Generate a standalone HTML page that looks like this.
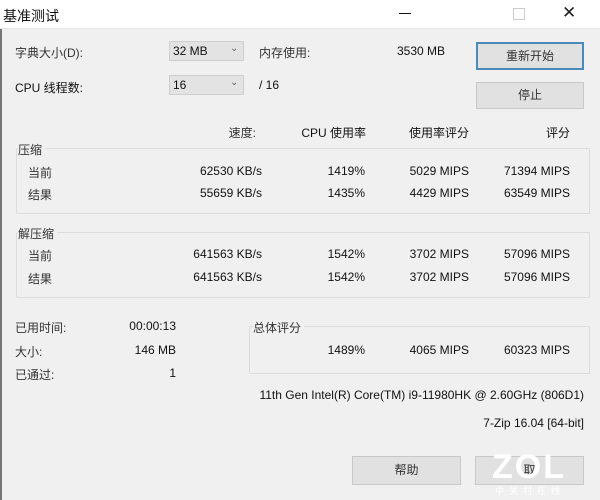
<!DOCTYPE html>
<html><head><meta charset="utf-8"><style>
body{margin:0;width:600px;height:500px;overflow:hidden;background:#f0f0f0;font-family:"Liberation Sans","Noto Sans CJK SC",sans-serif;font-size:12px;color:#111;position:relative}
.a{position:absolute;white-space:nowrap}
.r{text-align:right}
#title{position:absolute;left:0;top:0;width:600px;height:28px;background:#fff;border-bottom:1px solid #e6e6e6}
.sel{position:absolute;background:#e3e3e3;border:1px solid #cfcfcf;height:20px;box-sizing:border-box}
.btn{position:absolute;background:#e1e1e1;border:1px solid #c8c8c8;box-sizing:border-box;text-align:center;color:#333}
.grp{position:absolute;border:1px solid #dcdcdc;border-radius:2px}
.cn{color:#333}
</style></head><body>
<div style="position:absolute;left:0;top:0;width:2px;height:500px;background:#777"></div>
<div id="title"></div>
<div class="a" style="left:3px;top:6px;font-size:14px">基准测试</div>
<div class="a" style="left:399px;top:13px;width:12px;height:1px;background:#111"></div>
<div class="a" style="left:513px;top:8px;width:10px;height:10px;border:1px solid #ccc"></div>
<div class="a" style="left:562px;top:3px;font-size:17px;color:#222">✕</div>

<div class="a cn" style="left:15px;top:44px">字典大小(D):</div>
<div class="sel" style="left:169px;top:41px;width:75px"><span class="a" style="left:3px;top:2px">32 MB</span><span class="a" style="left:60px;top:1px;font-size:10px;color:#666">⌄</span></div>
<div class="a cn" style="left:259px;top:44px">内存使用:</div>
<div class="a" style="left:397px;top:44px">3530 MB</div>
<div class="btn" style="left:476px;top:42px;width:108px;height:28px;border:2px solid #4a8ab8;line-height:24px">重新开始</div>

<div class="a" style="left:15px;top:79px">CPU 线程数:</div>
<div class="sel" style="left:169px;top:75px;width:75px"><span class="a" style="left:3px;top:2px">16</span><span class="a" style="left:60px;top:1px;font-size:10px;color:#666">⌄</span></div>
<div class="a" style="left:259px;top:78px">/ 16</div>
<div class="btn" style="left:476px;top:82px;width:108px;height:27px;line-height:25px">停止</div>

<div class="a r cn" style="right:344px;top:124px">速度:</div>
<div class="a r" style="right:234px;top:124px">CPU 使用率</div>
<div class="a r" style="right:131px;top:124px">使用率评分</div>
<div class="a r" style="right:30px;top:124px">评分</div>

<div class="grp" style="left:16px;top:148px;width:572px;height:64px"></div>
<div class="a cn" style="left:18px;top:141px;background:#f0f0f0;padding-right:3px">压缩</div>
<div class="a cn" style="left:28px;top:164px">当前</div>
<div class="a cn" style="left:28px;top:186px">结果</div>
<div class="a r" style="right:338px;top:164px">62530 KB/s</div>
<div class="a r" style="right:235px;top:164px">1419%</div>
<div class="a r" style="right:131px;top:164px">5029 MIPS</div>
<div class="a r" style="right:30px;top:164px">71394 MIPS</div>
<div class="a r" style="right:338px;top:186px">55659 KB/s</div>
<div class="a r" style="right:235px;top:186px">1435%</div>
<div class="a r" style="right:131px;top:186px">4429 MIPS</div>
<div class="a r" style="right:30px;top:186px">63549 MIPS</div>

<div class="grp" style="left:16px;top:232px;width:572px;height:64px"></div>
<div class="a cn" style="left:18px;top:225px;background:#f0f0f0;padding-right:3px">解压缩</div>
<div class="a cn" style="left:28px;top:247px">当前</div>
<div class="a cn" style="left:28px;top:270px">结果</div>
<div class="a r" style="right:338px;top:247px">641563 KB/s</div>
<div class="a r" style="right:235px;top:247px">1542%</div>
<div class="a r" style="right:131px;top:247px">3702 MIPS</div>
<div class="a r" style="right:30px;top:247px">57096 MIPS</div>
<div class="a r" style="right:338px;top:270px">641563 KB/s</div>
<div class="a r" style="right:235px;top:270px">1542%</div>
<div class="a r" style="right:131px;top:270px">3702 MIPS</div>
<div class="a r" style="right:30px;top:270px">57096 MIPS</div>

<div class="a cn" style="left:15px;top:319px">已用时间:</div>
<div class="a cn" style="left:15px;top:343px">大小:</div>
<div class="a cn" style="left:15px;top:366px">已通过:</div>
<div class="a r" style="right:424px;top:319px">00:00:13</div>
<div class="a r" style="right:424px;top:343px">146 MB</div>
<div class="a r" style="right:424px;top:366px">1</div>

<div class="grp" style="left:249px;top:326px;width:339px;height:46px"></div>
<div class="a cn" style="left:253px;top:319px;background:#f0f0f0;padding-right:3px">总体评分</div>
<div class="a r" style="right:235px;top:343px">1489%</div>
<div class="a r" style="right:131px;top:343px">4065 MIPS</div>
<div class="a r" style="right:30px;top:343px">60323 MIPS</div>

<div class="a r" style="right:16px;top:388px">11th Gen Intel(R) Core(TM) i9-11980HK @ 2.60GHz (806D1)</div>
<div class="a r" style="right:16px;top:416px">7-Zip 16.04 [64-bit]</div>

<div class="btn" style="left:352px;top:456px;width:109px;height:29px;line-height:27px">帮助</div>
<div class="btn" style="left:475px;top:456px;width:109px;height:29px;line-height:27px">取</div>
<div class="a" style="left:492px;top:448px;font-size:34px;font-weight:bold;color:#fff;letter-spacing:2px">ZOL</div>
<div class="a" style="left:495px;top:484px;font-size:9px;color:#fff;letter-spacing:5px">中关村在线</div>
</body></html>
